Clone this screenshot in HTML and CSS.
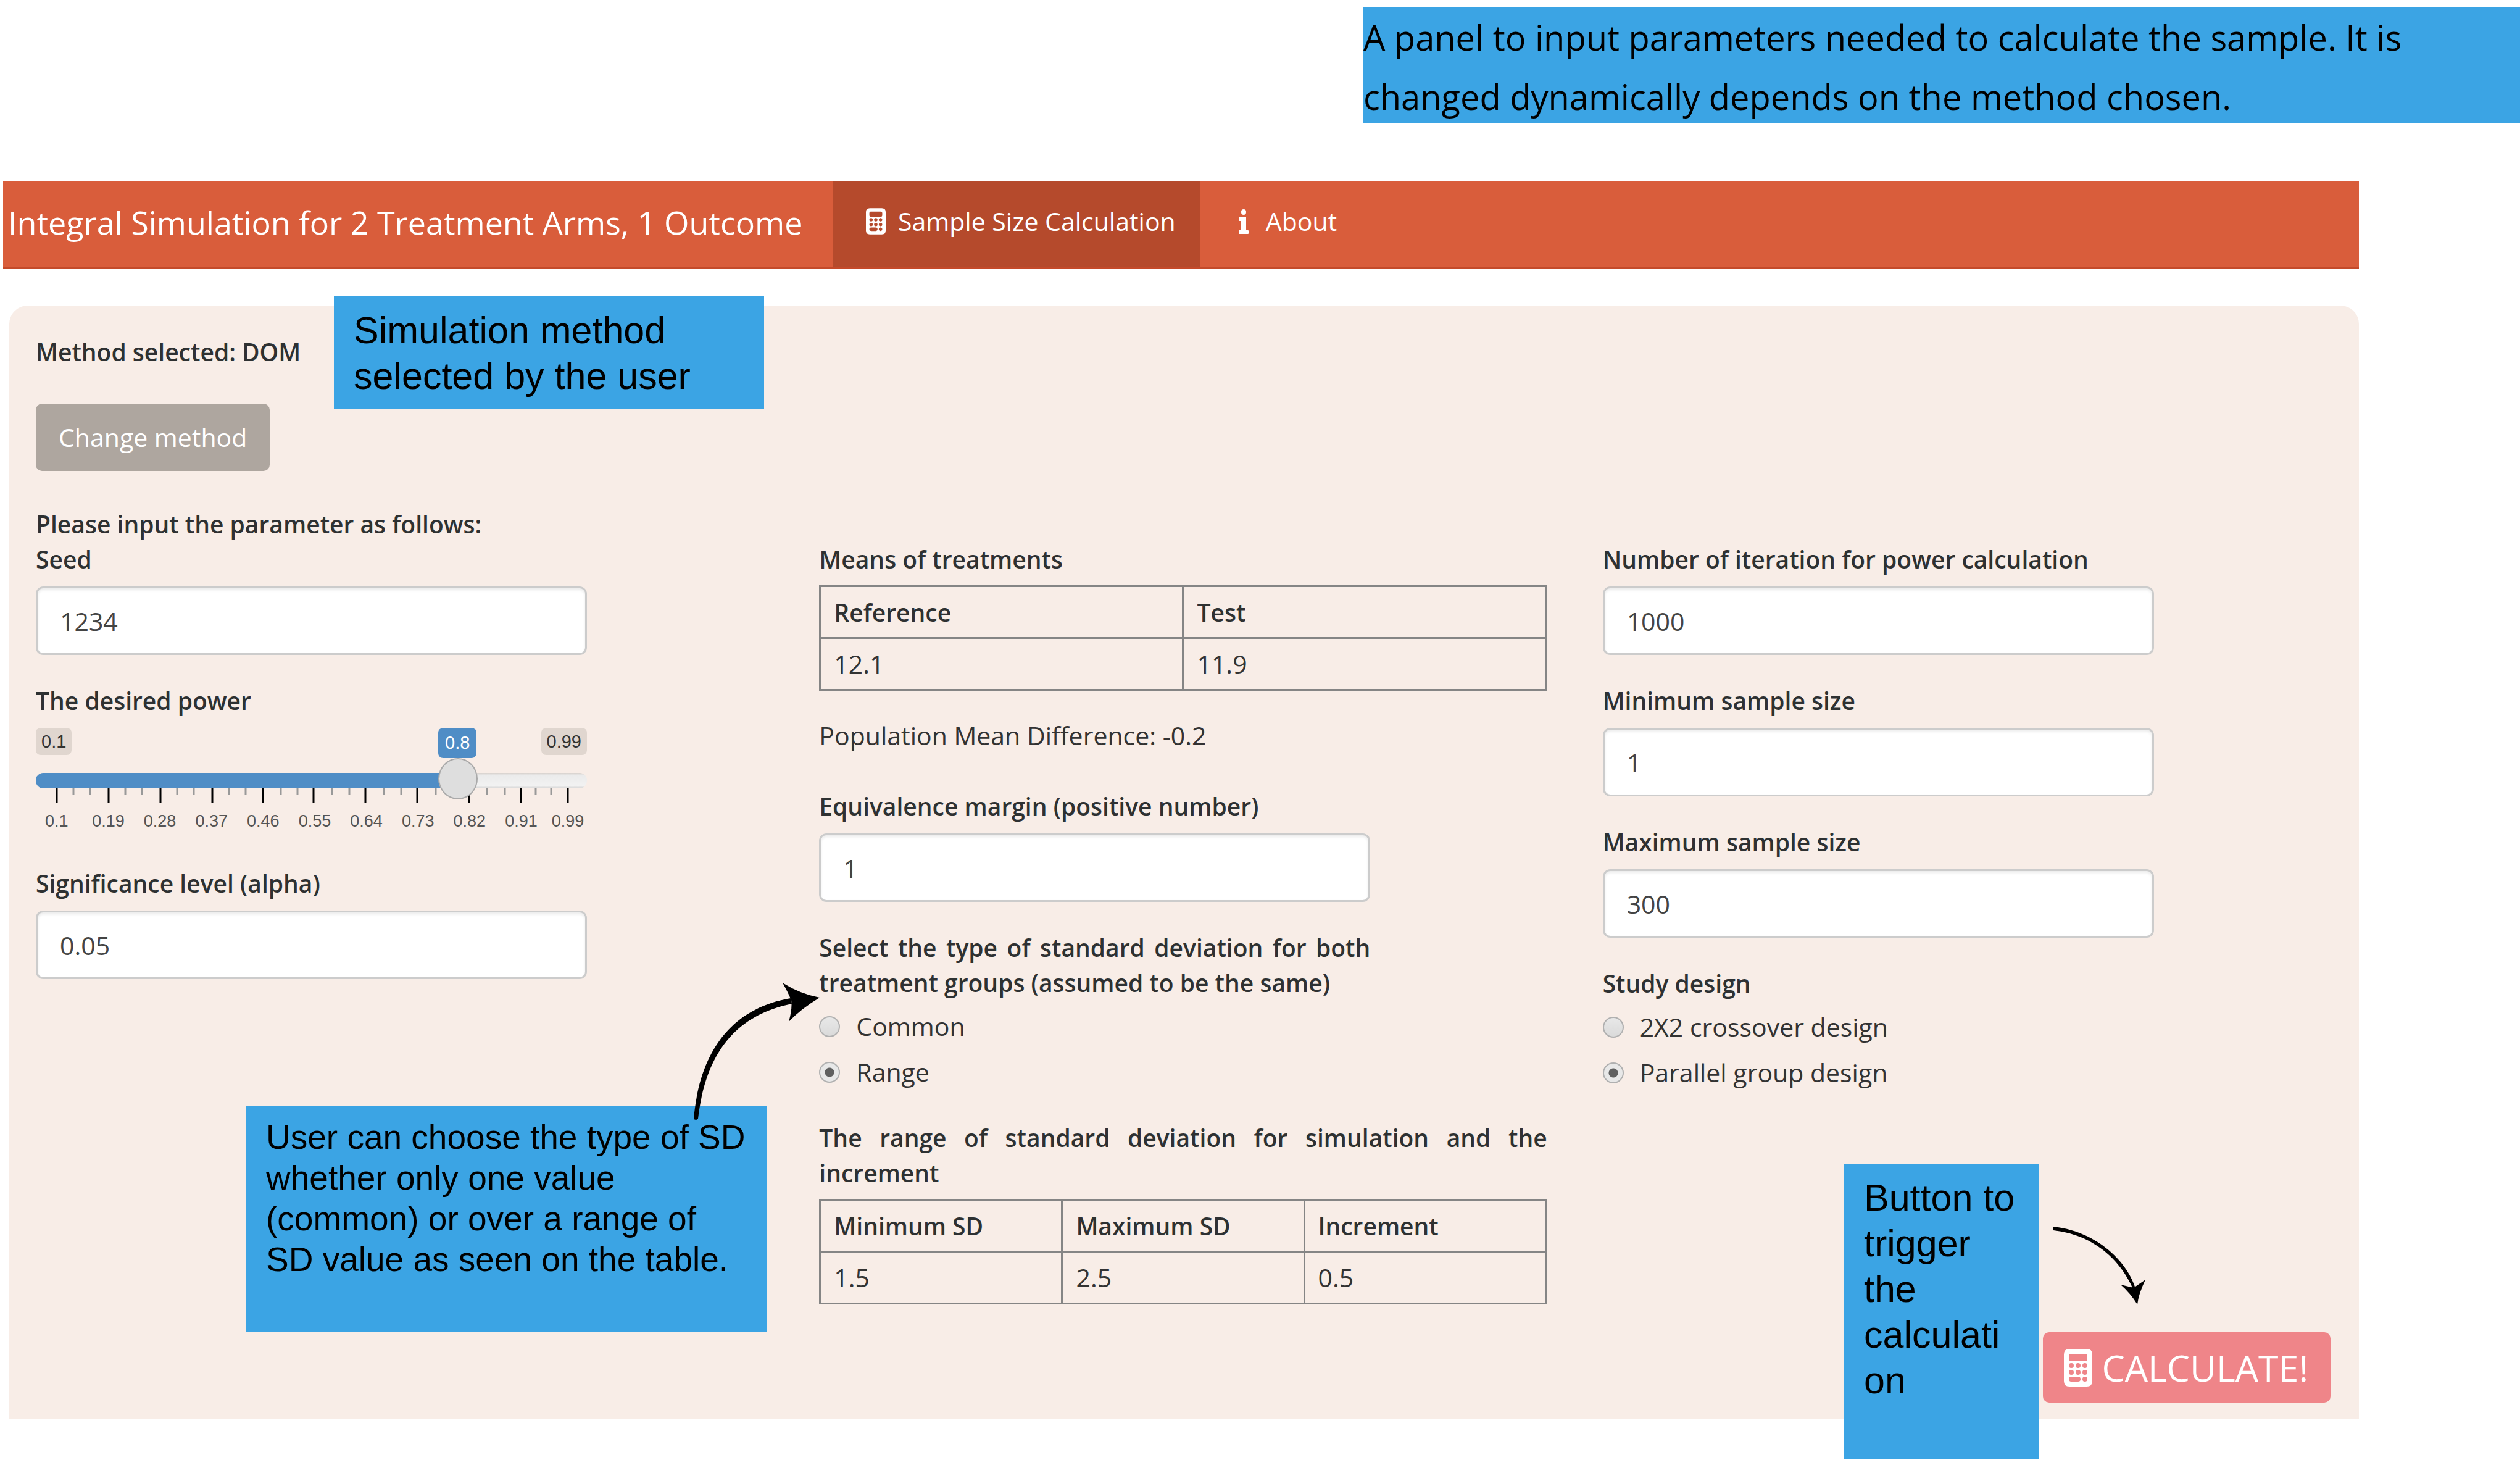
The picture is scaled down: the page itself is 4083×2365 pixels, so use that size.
FILE: index.html
```html
<!DOCTYPE html>
<html lang="en">
<head>
<meta charset="utf-8">
<title>Integral Simulation for 2 Treatment Arms, 1 Outcome</title>
<link rel="stylesheet" href="styles.css">
</head>
<body>
<svg class="symbols" aria-hidden="true">
  <symbol id="calculator" viewBox="0 0 46 61">
    <path fill="currentColor" fill-rule="evenodd" d="M9 0H37Q46 0 46 9V52Q46 61 37 61H9Q0 61 0 52V9Q0 0 9 0ZM11 8Q8 8 8 11V17Q8 20 11 20H35Q38 20 38 17V11Q38 8 35 8ZM8 27a4 4 0 1 0 8 0a4 4 0 1 0-8 0ZM19 27a4 4 0 1 0 8 0a4 4 0 1 0-8 0ZM30 27a4 4 0 1 0 8 0a4 4 0 1 0-8 0ZM8 38a4 4 0 1 0 8 0a4 4 0 1 0-8 0ZM19 38a4 4 0 1 0 8 0a4 4 0 1 0-8 0ZM30 38a4 4 0 1 0 8 0a4 4 0 1 0-8 0ZM12 45a4 4 0 0 0 0 8H23a4 4 0 0 0 0-8ZM30 49a4 4 0 1 0 8 0a4 4 0 1 0-8 0Z"/>
  </symbol>
</svg>

<p class="note note-top">A panel to input parameters needed to calculate the sample. It is changed dynamically depends on the method chosen.</p>

<div class="app">
  <nav class="navbar">
    <a class="brand" href="#">Integral Simulation for 2 Treatment Arms, 1 Outcome</a>
    <a class="tab tab-active" href="#"><svg class="tab-icon" aria-hidden="true"><use href="#calculator"/></svg>Sample Size Calculation</a>
    <a class="tab tab-about" href="#"><svg class="info-icon" viewBox="0 0 16 40" aria-hidden="true"><path fill="currentColor" d="M4 4a4 4 0 0 1 8 0v1a4 4 0 0 1-8 0ZM1 13H12V34H15Q16 34 16 35V39Q16 40 15 40H1Q0 40 0 39V35Q0 34 1 34H4V19H1Q0 19 0 18V14Q0 13 1 13Z"/></svg>About</a>
  </nav>

  <main class="panel">
    <p class="strong">Method selected: DOM</p>
    <button class="btn btn-method" type="button">Change method</button>
    <p class="strong">Please input the parameter as follows:</p>

    <div class="columns">
      <section class="column">
        <div class="field">
          <label for="seed">Seed</label>
          <input class="box" id="seed" type="text" value="1234">
        </div>
        <div class="field">
          <label for="power">The desired power</label>
          <div class="slider">
            <div class="slider-ends"><span>0.1</span><span>0.99</span></div>
            <output class="slider-value" for="power">0.8</output>
            <div class="slider-rail">
              <svg class="ticks" viewBox="0 0 893 24" aria-hidden="true">
                <path class="tick-major" d="M34 0V24M118 0V24M202 0V24M286 0V24M368 0V24M450 0V24M534 0V24M618 0V24M702 0V24M786 0V24M862 0V24"/>
                <path class="tick-minor" d="M61 0V10M88 0V10M145 0V10M172 0V10M229 0V10M256 0V10M313 0V10M340 0V10M397 0V10M424 0V10M480 0V10M508 0V10M564 0V10M592 0V10M648 0V10M676 0V10M731 0V10M760 0V10M810 0V10M835 0V10"/>
              </svg>
              <input id="power" type="range" min="0.1" max="0.99" step="0.01" value="0.8">
            </div>
            <ol class="scale">
              <li>0.1</li><li>0.19</li><li>0.28</li><li>0.37</li><li>0.46</li><li>0.55</li><li>0.64</li><li>0.73</li><li>0.82</li><li>0.91</li><li>0.99</li>
            </ol>
          </div>
        </div>
        <div class="field">
          <label for="alpha">Significance level (alpha)</label>
          <input class="box" id="alpha" type="text" value="0.05">
        </div>
      </section>

      <section class="column">
        <table>
          <caption>Means of treatments</caption>
          <thead><tr><th>Reference</th><th>Test</th></tr></thead>
          <tbody><tr><td>12.1</td><td>11.9</td></tr></tbody>
        </table>
        <p class="difference">Population Mean Difference: -0.2</p>
        <div class="field">
          <label for="margin">Equivalence margin (positive number)</label>
          <input class="box" id="margin" type="text" value="1">
        </div>
        <fieldset class="choices">
          <legend>Select the type of standard deviation for both treatment groups (assumed to be the same)</legend>
          <label class="choice"><input type="radio" name="sd">Common</label>
          <label class="choice"><input type="radio" name="sd" checked>Range</label>
        </fieldset>
        <table>
          <caption>The range of standard deviation for simulation and the increment</caption>
          <thead><tr><th>Minimum SD</th><th>Maximum SD</th><th>Increment</th></tr></thead>
          <tbody><tr><td>1.5</td><td>2.5</td><td>0.5</td></tr></tbody>
        </table>
      </section>

      <section class="column">
        <div class="field">
          <label for="iterations">Number of iteration for power calculation</label>
          <input class="box" id="iterations" type="text" value="1000">
        </div>
        <div class="field">
          <label for="min-size">Minimum sample size</label>
          <input class="box" id="min-size" type="text" value="1">
        </div>
        <div class="field">
          <label for="max-size">Maximum sample size</label>
          <input class="box" id="max-size" type="text" value="300">
        </div>
        <fieldset class="choices">
          <legend>Study design</legend>
          <label class="choice"><input type="radio" name="design">2X2 crossover design</label>
          <label class="choice"><input type="radio" name="design" checked>Parallel group design</label>
        </fieldset>
      </section>
    </div>

    <button class="btn btn-calculate" type="button"><svg aria-hidden="true"><use href="#calculator"/></svg>CALCULATE!</button>
  </main>
</div>

<aside class="note note-method">Simulation method selected by the user</aside>
<aside class="note note-sd">User can choose the type of SD whether only one value (common) or over a range of SD value as seen on the table.</aside>
<aside class="note note-button">Button to trigger the calculation</aside>

<svg class="arrow arrow-sd" viewBox="0 0 212 236" aria-hidden="true">
  <path d="M4 220C14 110 66 41 161 25L163 34C75 52 24 110 11 220A4 4 0 0 1 4 220Z"/>
  <path d="M148 0Q176 18 208 24Q178 42 158 63Q164 42 162 28Q156 14 148 0Z"/>
</svg>
<svg class="arrow arrow-button" viewBox="0 0 160 132" aria-hidden="true">
  <path d="M7 3C72 10 124 54 140 103L136 104C114 54 70 16 7 9Z"/>
  <path d="M116 97L137 102L156 89Q145 112 143 129Q132 111 116 97Z"/>
</svg>
</body>
</html>
```
FILE: styles.css
```css
* {
  box-sizing: border-box;
}

body {
  position: relative;
  margin: 0;
  padding: 12px 0 66px;
  background: #fff;
  color: #333;
  font: 41px/57px "Open Sans", "Noto Sans", sans-serif;
}

p {
  margin: 0;
}

.symbols {
  position: absolute;
  width: 0;
  height: 0;
}

/* Annotations */
.note {
  background: #3ba4e4;
  color: #000;
  font-family: "Liberation Sans", Arial, sans-serif;
}

.note-top {
  width: 45.9%;
  height: 187px;
  margin-left: auto;
  font: 56px/96px "Open Sans", sans-serif;
}

.note-method,
.note-sd,
.note-button {
  position: absolute;
  padding: 18px 32px;
  font-size: 61px;
  line-height: 74px;
}

.note-method {
  left: 541px;
  top: 480px;
  width: 697px;
  height: 182px;
}

.note-sd {
  left: 399px;
  top: 1791px;
  width: 843px;
  height: 366px;
  font-size: 55px;
  line-height: 66px;
}

.note-button {
  left: 2988px;
  top: 1885px;
  width: 316px;
  height: 478px;
  overflow-wrap: anywhere;
}

.arrow {
  position: absolute;
}

.arrow-sd {
  left: 1120px;
  top: 1592px;
  width: 212px;
}

.arrow-button {
  left: 3320px;
  top: 1984px;
  width: 160px;
}

/* Navigation bar */
.app {
  margin: 95px 261px 0 5px;
}

.navbar {
  display: flex;
  height: 142px;
  background: #d95d3b;
  border-bottom: 3px solid #c44a2a;
}

.navbar a {
  color: #fff;
  text-decoration: none;
  white-space: nowrap;
}

.brand {
  width: 1344px;
  padding-left: 8px;
  font-size: 52px;
  line-height: 132px;
}

.tab {
  display: flex;
  align-items: center;
  padding: 0 40px 10px 54px;
}

.tab-active {
  background: #b54a2c;
}

.tab-icon {
  width: 32px;
  height: 43px;
  margin-right: 20px;
}

.tab-about {
  padding-left: 62px;
}

.info-icon {
  width: 16px;
  height: 40px;
  margin-right: 28px;
}

/* Parameter panel */
.panel {
  display: flex;
  flex-direction: column;
  margin: 59px 0 0 10px;
  padding: 46px 46px 27px 43px;
  border-radius: 30px 30px 0 0;
  background: #f8ede7;
}

.strong,
.field label,
legend,
caption,
th {
  font-size: 39px;
  font-weight: 600;
  color: #2e3132;
}

.btn {
  display: flex;
  align-items: center;
  justify-content: center;
  border: 0;
  border-radius: 10px;
  color: #fff;
  font: inherit;
}

.btn-method {
  align-self: flex-start;
  height: 109px;
  margin: 56px 0 57px;
  padding: 0 37px;
  background: #aea69f;
}

.btn-calculate {
  align-self: flex-end;
  gap: 16px;
  height: 114px;
  margin-top: 45px;
  padding: 0 36px 0 34px;
  background: #ef8589;
  font-size: 59px;
}

.btn-calculate svg {
  width: 46px;
  height: 61px;
}

.columns {
  display: grid;
  grid-template-columns: repeat(3, 1fr);
  gap: 90px;
}

.field {
  display: flex;
  flex-direction: column;
  gap: 16px;
  max-width: 893px;
  margin-bottom: 45px;
}

.box {
  width: 100%;
  height: 111px;
  padding: 0 36px;
  border: 3px solid #ccc;
  border-radius: 12px;
  background: #fff;
  box-shadow: inset 0 3px 4px #ececec;
  color: #444;
  font: inherit;
}

/* Range slider */
.slider {
  position: relative;
  height: 178px;
  font-family: "Liberation Sans", Arial, sans-serif;
}

.slider-ends {
  display: flex;
  justify-content: space-between;
  align-items: flex-start;
  height: 49px;
}

.slider-ends span,
.slider-value {
  padding: 0 9px;
  border-radius: 8px;
  background: #e0d6cf;
  font-size: 29px;
  line-height: 44px;
}

.slider-value {
  position: absolute;
  left: 652px;
  top: 0;
  padding: 0 11px;
  background: #4f8dc6;
  color: #fff;
  line-height: 49px;
}

.slider-rail {
  display: grid;
}

.ticks,
.slider-rail input {
  grid-area: 1 / 1;
  width: 100%;
}

.ticks {
  height: 24px;
  margin-top: 49px;
}

.tick-major {
  stroke: #000;
  stroke-width: 3;
}

.tick-minor {
  stroke: #999;
  stroke-width: 3;
}

.slider-rail input {
  height: 73px;
  margin: 0;
  appearance: none;
  background: none;
}

.slider-rail input::-webkit-slider-runnable-track {
  height: 25px;
  border-radius: 12px;
  background: linear-gradient(90deg, #4f8dc6 77%, transparent 77%), linear-gradient(#d8d2ce, #ebebeb 4px, #f2f2f2 21px, #d0d0d0);
}

.slider-rail input::-webkit-slider-thumb {
  width: 64px;
  height: 67px;
  margin-top: -24px;
  appearance: none;
  border: 2px solid #aaa;
  border-radius: 50%;
  background: #dedede;
}

.scale {
  display: flex;
  margin: 14px -3px 0 -8px;
  padding: 0;
  list-style: none;
  color: #555;
  font-size: 27px;
  line-height: 30px;
  text-align: center;
}

.scale li {
  flex: 84 1 0;
}

.scale li:last-child {
  flex-grow: 68;
}

/* Tables */
table {
  width: 100%;
  border-collapse: collapse;
  table-layout: fixed;
}

caption {
  padding-bottom: 14px;
  text-align: justify;
}

th,
td {
  height: 84px;
  padding: 12px 21px;
  border: 3px solid #858585;
  text-align: left;
}

.difference {
  margin: 44px 0 57px;
}

/* Radio groups */
.choices {
  max-width: 893px;
  margin: 0 0 49px;
  padding: 0;
  border: 0;
}

legend {
  padding: 0 0 14px;
  text-align: justify;
}

.choice {
  display: flex;
  align-items: center;
  gap: 26px;
}

.choice + .choice {
  margin-top: 17px;
}

.choice input {
  width: 34px;
  height: 34px;
  margin: 0;
  appearance: none;
  border: 2px solid #b0b0b0;
  border-radius: 50%;
  background: linear-gradient(#e8e8e8, #dadada);
}

.choice input:checked {
  background: radial-gradient(circle, #606060 7px, #e8e8e8 8px);
}
```
